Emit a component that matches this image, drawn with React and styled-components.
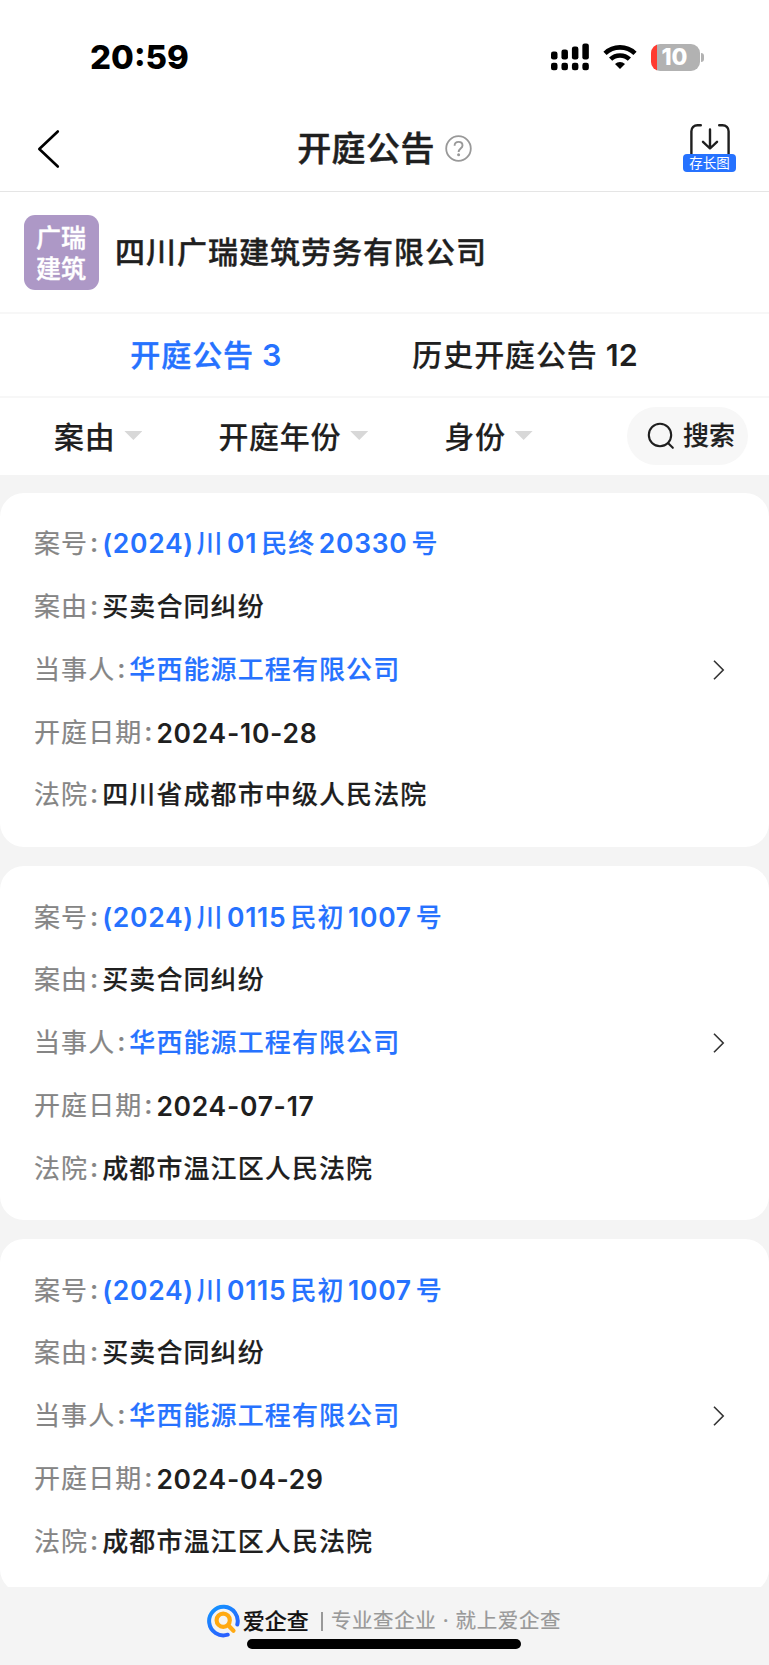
import styled, { createGlobalStyle } from 'styled-components';

const GlobalStyle = createGlobalStyle`
	* {
		box-sizing: border-box;
	}

	body {
		margin: 0;
		background-color: #f4f4f4;
		color: #1f1f1f;
		font-family: Inter, 'Noto Sans CJK SC', sans-serif;
	}
`;

const Page = styled.div`
	display: flex;
	flex-direction: column;
	width: 769px;
	height: 1665px;
	overflow: hidden;
`;

const StatusBar = styled.div`
	display: flex;
	flex: none;
	align-items: center;
	justify-content: space-between;
	height: 106px;
	padding: 8px 65px 0 90px;
	background-color: white;
`;

const Time = styled.span`
	color: black;
	font-size: 33px;
	font-weight: 800;
	line-height: 40px;
	letter-spacing: 0;
`;

const StatusIcons = styled.div`
	display: flex;
	align-items: center;
	gap: 14px;
`;

const Battery = styled.div`
	display: flex;
	align-items: center;
	gap: 1px;
`;

const BatteryBody = styled.div`
	width: 49px;
	height: 27px;
	padding-right: 2px;
	border-radius: 9px;
	background: linear-gradient(to right, #ff3b30 6px, #b2b2b2 6px);
	color: white;
	font-size: 23px;
	font-weight: 800;
	line-height: 27px;
	text-align: center;
`;

const BatteryTip = styled.div`
	width: 3px;
	height: 9px;
	border-radius: 0 4px 4px 0;
	background-color: #b2b2b2;
`;

const Header = styled.header`
	display: grid;
	flex: none;
	grid-template-columns: 110px 1fr 110px;
	align-items: center;
	height: 86px;
	border-bottom: 1px solid #e5e5e5;
	background-color: white;
`;

const Back = styled.button`
	display: flex;
	padding: 0 0 0 35px;
	border: 0;
	background: none;
`;

const Title = styled.h1`
	display: flex;
	align-items: center;
	justify-content: center;
	gap: 10px;
	margin: 0;
	font-size: 34px;
	font-weight: 500;
	line-height: 48px;
	letter-spacing: 0.4px;
	-webkit-text-stroke: 0.5px;
`;

const Save = styled.button`
	display: flex;
	flex-direction: column;
	align-items: center;
	width: 53px;
	margin: 0 0 2px 24px;
	padding: 0;
	border: 0;
	background: none;
`;

const SaveLabel = styled.span`
	width: 53px;
	height: 18px;
	border-radius: 4px;
	background-color: #2672ff;
	color: white;
	font-family: 'Noto Sans CJK SC', sans-serif;
	font-size: 13.5px;
	line-height: 17px;
	text-align: center;
`;

const Company = styled.section`
	display: flex;
	flex: none;
	align-items: center;
	gap: 16px;
	height: 122px;
	padding: 0 24px;
	border-bottom: 2px solid #f7f7f7;
	background-color: white;
`;

const Logo = styled.div`
	display: flex;
	flex: none;
	align-items: center;
	width: 75px;
	height: 75px;
	padding: 3px 0 0 12px;
	border-radius: 11px;
	background-color: #ad98c6;
	color: white;
	font-size: 25px;
	font-weight: 500;
	line-height: 31px;
	-webkit-text-stroke: 0.4px;
`;

const CompanyName = styled.h2`
	margin: 0;
	padding-bottom: 4px;
	font-size: 30px;
	font-weight: 500;
	letter-spacing: 1px;
	-webkit-text-stroke: 0.4px;
`;

const Tabs = styled.nav`
	display: flex;
	flex: none;
	justify-content: center;
	gap: 131px;
	height: 84px;
	padding: 0 1px 4px 0;
	border-bottom: 2px solid #f7f7f7;
	background-color: white;
`;

const Tab = styled.a`
	display: flex;
	align-items: center;
	gap: 8px;
	color: ${(props) => (props.$active ? '#2672ff' : '#1f1f1f')};
	font-size: 30px;
	font-weight: 500;
	letter-spacing: 0.9px;
	-webkit-text-stroke: ${(props) => (props.$active ? '0.4px' : '0.15px')};
`;

const Count = styled.span`
	padding-top: 2px;
	font-size: 30.5px;
	font-weight: 600;
	letter-spacing: 0;
	-webkit-text-stroke: 0;
`;

const Filters = styled.div`
	display: flex;
	flex: none;
	align-items: center;
	height: 77px;
	padding: 0 21px 0 54px;
	background-color: white;
`;

const Filter = styled.button`
	display: flex;
	align-items: center;
	gap: 9px;
	margin: 0 76px 4px 0;
	padding: 0;
	border: 0;
	background: none;
	color: inherit;
	font: inherit;
	font-size: 30px;
	font-weight: 500;
	letter-spacing: 0.7px;
	-webkit-text-stroke: 0.15px;

	&::after {
		width: 18px;
		height: 9px;
		margin-top: 2px;
		background-color: #d8d8d8;
		clip-path: polygon(0 0, 100% 0, 50% 100%);
		content: '';
	}
`;

const Search = styled.button`
	display: flex;
	align-items: center;
	gap: 8px;
	width: 121px;
	height: 58px;
	margin: 0 0 1px auto;
	padding: 0 0 0 20px;
	border: 0;
	border-radius: 29px;
	background-color: #f7f7f7;
	color: inherit;
	font: inherit;
	font-size: 26px;
	font-weight: 500;
	line-height: 30px;
	-webkit-text-stroke: 0.15px;
`;

const List = styled.main`
	display: flex;
	flex: none;
	flex-direction: column;
	gap: 19.5px;
	height: 1112px;
	padding-top: 18px;
	overflow: hidden;
`;

const Card = styled.article`
	display: flex;
	flex: none;
	align-items: center;
	justify-content: space-between;
	height: 353.7px;
	padding: 0 44px 0 34px;
	border-radius: 24px;
	background-color: white;
`;

const Fields = styled.dl`
	display: grid;
	grid-auto-rows: 62.75px;
	align-items: center;
	margin: 0;
`;

const Field = styled.div`
	display: flex;
	align-items: center;
	font-size: 26px;
	line-height: 40px;
	letter-spacing: 1.1px;
	white-space: nowrap;
`;

const Label = styled.dt`
	display: flex;
	color: #858585;
	-webkit-text-stroke: 0.2px;
`;

const Colon = styled.span`
	width: 14px;
	padding-right: 2px;
	font-size: 27px;
	font-weight: 500;
	line-height: 37px;
	letter-spacing: 0;
	text-align: center;
`;

const Value = styled.dd`
	display: flex;
	margin: 0;
	color: ${(props) => (props.$link ? '#2672ff' : '#1f1f1f')};
	font-weight: 500;
	-webkit-text-stroke: 0.15px;
`;

const Latin = styled.span`
	margin: 0 4px 0 3.5px;
	font-size: 26.5px;
	font-weight: 600;
	line-height: 38px;
	letter-spacing: 0.7px;
	-webkit-text-stroke: 0;

	&:first-child {
		margin: 0 2.5px 0 0;
	}
`;

const Footer = styled.footer`
	display: flex;
	flex: 1;
	flex-direction: column;
	align-items: center;
	padding: 16px 1px 0 0;
`;

const Slogan = styled.div`
	display: flex;
	align-items: center;
	height: 36px;
	color: #999;
	font-size: 20.5px;
	line-height: 28px;
	letter-spacing: 0.6px;
	-webkit-text-stroke: 0.2px;
`;

const Brand = styled.strong`
	margin-left: 3px;
	color: #111;
	font-size: 22px;
	font-weight: 500;
	letter-spacing: 0;
`;

const Divider = styled.i`
	width: 2px;
	height: 19px;
	margin: 0 8px 0 12px;
	background-color: #999;
`;

const HomeIndicator = styled.div`
	width: 274px;
	height: 10px;
	border-radius: 5px;
	background-color: black;
`;

const SignalIcon = () => (
	<svg width="38" height="28" viewBox="0 0 38 28">
		{[8.5, 6.5, 3.5, 0.5].map((top, i) => (
			<g key={top}>
				<rect x={i * 10.45} y={top} width="6.5" height={16.5 - top} rx="2.3" />
				<rect x={i * 10.45} y="19.7" width="6.5" height="7.5" rx="2.3" />
			</g>
		))}
	</svg>
);

const WifiIcon = () => (
	<svg width="34" height="26" viewBox="0 0 34 26">
		<g fill="none" stroke="black" strokeWidth="4.6">
			<path d="M2 9.4a21.7 21.7 0 0 1 30 0" />
			<path d="M7.6 15.2a13.6 13.6 0 0 1 18.8 0" />
		</g>
		<path d="M17 25l-5-5a7.2 7.2 0 0 1 10 0z" />
	</svg>
);

const BackIcon = () => (
	<svg width="26" height="40" viewBox="0 0 26 40" fill="none">
		<path
			d="M22.8 2.5L4.3 20l18.5 17.5"
			stroke="black"
			strokeWidth="2.6"
			strokeLinecap="round"
			strokeLinejoin="round"
		/>
	</svg>
);

const HelpIcon = () => (
	<svg width="27" height="27" viewBox="0 0 27 27" fill="none" stroke="#999">
		<circle cx="13.5" cy="13.5" r="12.3" strokeWidth="1.8" />
		<path
			d="M9.6 10.7c0-2.3 1.7-3.8 4-3.8s3.9 1.5 3.9 3.5c0 3-3.9 3.1-3.9 6.5"
			strokeWidth="1.9"
		/>
		<circle cx="13.6" cy="19.8" r="1.5" fill="#999" stroke="none" />
	</svg>
);

const SaveIcon = () => (
	<svg width="40" height="30" viewBox="0 0 40 30" fill="none">
		<path
			d="M10.8 1.2H7.4a6 6 0 0 0-6 6V30M29.2 1.2h3.4a6 6 0 0 1 6 6V30M20 5.5v18.8M13 17.8l7 6.7 7-6.7"
			stroke="#1f1f1f"
			strokeWidth="2.4"
			strokeLinecap="round"
			strokeLinejoin="round"
		/>
	</svg>
);

const SearchIcon = () => (
	<svg width="28" height="28" viewBox="0 0 28 28" fill="none">
		<g stroke="#1f1f1f" strokeWidth="2.1" strokeLinecap="round">
			<circle cx="13" cy="13" r="11.2" />
			<path d="M21 21l4.8 4.8" />
		</g>
	</svg>
);

const ArrowIcon = () => (
	<svg width="13" height="22" viewBox="0 0 13 22" fill="none">
		<path d="M2 1.8l9.2 9.2L2 20.2" stroke="#333" strokeWidth="1.6" />
	</svg>
);

const BrandIcon = () => (
	<svg width="33" height="34" viewBox="0 0 33 34" fill="none">
		<defs>
			<linearGradient id="ring" x1="0" y1="0" x2="0.6" y2="1">
				<stop offset="0" stopColor="#1296ff" />
				<stop offset="1" stopColor="#2b60ff" />
			</linearGradient>
		</defs>
		<path
			d="M30.3 20.5A14.3 14.3 0 1 0 20.7 30.7"
			stroke="url(#ring)"
			strokeWidth="4"
			strokeLinecap="round"
		/>
		<g stroke="#ffa912" strokeWidth="4.2" strokeLinecap="round">
			<circle cx="16.2" cy="16.2" r="6.6" />
			<path d="M21.2 21.2l5.3 5.6" />
		</g>
	</svg>
);

const hearings = [
	{
		id: 1,
		caseNo: '(2024)川01民终20330号',
		date: '2024-10-28',
		court: '四川省成都市中级人民法院'
	},
	{
		id: 2,
		caseNo: '(2024)川0115民初1007号',
		date: '2024-07-17',
		court: '成都市温江区人民法院'
	},
	{
		id: 3,
		caseNo: '(2024)川0115民初1007号',
		date: '2024-04-29',
		court: '成都市温江区人民法院'
	}
];

// Separa los números del texto chino para darles su propio espaciado
const splitText = (text) =>
	text
		.split(/([\d()-]+)/)
		.filter(Boolean)
		.map((part, i) =>
			/\d/.test(part) ? <Latin key={i}>{part}</Latin> : <span key={i}>{part}</span>
		);

const Row = ({ label, link, children }) => (
	<Field>
		<Label>
			{label}
			<Colon>:</Colon>
		</Label>
		<Value $link={link}>{splitText(children)}</Value>
	</Field>
);

const Hearing = ({ caseNo, date, court }) => (
	<Card>
		<Fields>
			<Row label="案号" link>{caseNo}</Row>
			<Row label="案由">买卖合同纠纷</Row>
			<Row label="当事人" link>华西能源工程有限公司</Row>
			<Row label="开庭日期">{date}</Row>
			<Row label="法院">{court}</Row>
		</Fields>
		<ArrowIcon />
	</Card>
);

function App() {
	return (
		<Page>
			<GlobalStyle />

			<StatusBar>
				<Time>20:59</Time>
				<StatusIcons>
					<SignalIcon />
					<WifiIcon />
					<Battery>
						<BatteryBody>10</BatteryBody>
						<BatteryTip />
					</Battery>
				</StatusIcons>
			</StatusBar>

			<Header>
				<Back>
					<BackIcon />
				</Back>
				<Title>
					开庭公告
					<HelpIcon />
				</Title>
				<Save>
					<SaveIcon />
					<SaveLabel>存长图</SaveLabel>
				</Save>
			</Header>

			<Company>
				<Logo>
					广瑞
					<br />
					建筑
				</Logo>
				<CompanyName>四川广瑞建筑劳务有限公司</CompanyName>
			</Company>

			<Tabs>
				<Tab $active>
					开庭公告 <Count>3</Count>
				</Tab>
				<Tab>
					历史开庭公告 <Count>12</Count>
				</Tab>
			</Tabs>

			<Filters>
				<Filter>案由</Filter>
				<Filter>开庭年份</Filter>
				<Filter>身份</Filter>
				<Search>
					<SearchIcon />
					<span>搜索</span>
				</Search>
			</Filters>

			<List>
				{hearings.map((hearing) => (
					<Hearing key={hearing.id} {...hearing} />
				))}
			</List>

			<Footer>
				<Slogan>
					<BrandIcon />
					<Brand>爱企查</Brand>
					<Divider />
					<span>专业查企业 · 就上爱企查</span>
				</Slogan>
				<HomeIndicator />
			</Footer>
		</Page>
	);
}

export default App;
